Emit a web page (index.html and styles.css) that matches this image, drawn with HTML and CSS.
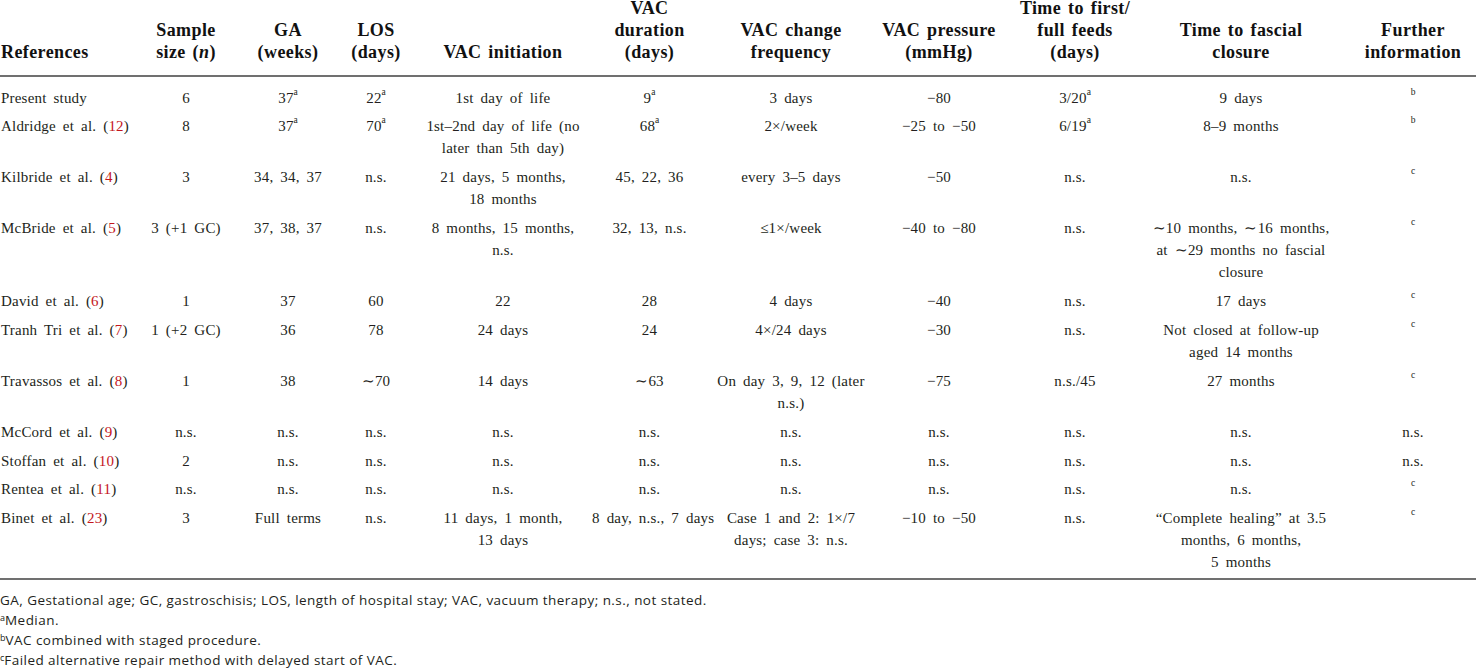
FILE: index.html
```html
<!DOCTYPE html>
<html lang="en">
<head>
<meta charset="utf-8">
<title>VAC therapy studies</title>
<link rel="stylesheet" href="styles.css">
</head>
<body>
<div class="page">
<table class="data">
  <colgroup>
    <col class="c1"><col class="c2"><col class="c3"><col class="c4"><col class="c5"><col class="c6">
    <col class="c7"><col class="c8"><col class="c9"><col class="c10"><col class="c11">
  </colgroup>
  <thead>
    <tr>
      <th class="ref">References</th>
      <th>Sample<br>size (<i>n</i>)</th>
      <th>GA<br>(weeks)</th>
      <th>LOS<br>(days)</th>
      <th>VAC initiation</th>
      <th>VAC<br>duration<br>(days)</th>
      <th>VAC change<br>frequency</th>
      <th>VAC pressure<br>(mmHg)</th>
      <th>Time to first/<br>full feeds<br>(days)</th>
      <th>Time to fascial<br>closure</th>
      <th class="last">Further<br>information</th>
    </tr>
  </thead>
  <tbody>
    <tr>
      <td class="ref">Present study</td><td>6</td><td>37<sup class="sup">a</sup></td><td>22<sup class="sup">a</sup></td>
      <td>1st day of life</td><td>9<sup class="sup">a</sup></td><td>3 days</td><td>−80</td><td>3/20<sup class="sup">a</sup></td>
      <td>9 days</td><td class="last"><sup class="sup">b</sup></td>
    </tr>
    <tr>
      <td class="ref">Aldridge et al. (<span class="cite">12</span>)</td><td>8</td><td>37<sup class="sup">a</sup></td><td>70<sup class="sup">a</sup></td>
      <td>1st–2nd day of life (no<br>later than 5th day)</td><td>68<sup class="sup">a</sup></td><td>2×/week</td><td>−25 to −50</td><td>6/19<sup class="sup">a</sup></td>
      <td>8–9 months</td><td class="last"><sup class="sup">b</sup></td>
    </tr>
    <tr>
      <td class="ref">Kilbride et al. (<span class="cite">4</span>)</td><td>3</td><td>34, 34, 37</td><td>n.s.</td>
      <td>21 days, 5 months,<br>18 months</td><td>45, 22, 36</td><td>every 3–5 days</td><td>−50</td><td>n.s.</td>
      <td>n.s.</td><td class="last"><sup class="sup">c</sup></td>
    </tr>
    <tr>
      <td class="ref">McBride et al. (<span class="cite">5</span>)</td><td>3 (+1 GC)</td><td>37, 38, 37</td><td>n.s.</td>
      <td>8 months, 15 months,<br>n.s.</td><td>32, 13, n.s.</td><td>≤1×/week</td><td>−40 to −80</td><td>n.s.</td>
      <td>∼10 months, ∼16 months,<br>at ∼29 months no fascial<br>closure</td><td class="last"><sup class="sup">c</sup></td>
    </tr>
    <tr>
      <td class="ref">David et al. (<span class="cite">6</span>)</td><td>1</td><td>37</td><td>60</td>
      <td>22</td><td>28</td><td>4 days</td><td>−40</td><td>n.s.</td>
      <td>17 days</td><td class="last"><sup class="sup">c</sup></td>
    </tr>
    <tr>
      <td class="ref">Tranh Tri et al. (<span class="cite">7</span>)</td><td>1 (+2 GC)</td><td>36</td><td>78</td>
      <td>24 days</td><td>24</td><td>4×/24 days</td><td>−30</td><td>n.s.</td>
      <td>Not closed at follow-up<br>aged 14 months</td><td class="last"><sup class="sup">c</sup></td>
    </tr>
    <tr>
      <td class="ref">Travassos et al. (<span class="cite">8</span>)</td><td>1</td><td>38</td><td>∼70</td>
      <td>14 days</td><td>∼63</td><td>On day 3, 9, 12 (later<br>n.s.)</td><td>−75</td><td>n.s./45</td>
      <td>27 months</td><td class="last"><sup class="sup">c</sup></td>
    </tr>
    <tr>
      <td class="ref">McCord et al. (<span class="cite">9</span>)</td><td>n.s.</td><td>n.s.</td><td>n.s.</td>
      <td>n.s.</td><td>n.s.</td><td>n.s.</td><td>n.s.</td><td>n.s.</td>
      <td>n.s.</td><td class="last">n.s.</td>
    </tr>
    <tr>
      <td class="ref">Stoffan et al. (<span class="cite">10</span>)</td><td>2</td><td>n.s.</td><td>n.s.</td>
      <td>n.s.</td><td>n.s.</td><td>n.s.</td><td>n.s.</td><td>n.s.</td>
      <td>n.s.</td><td class="last">n.s.</td>
    </tr>
    <tr>
      <td class="ref">Rentea et al. (<span class="cite">11</span>)</td><td>n.s.</td><td>n.s.</td><td>n.s.</td>
      <td>n.s.</td><td>n.s.</td><td>n.s.</td><td>n.s.</td><td>n.s.</td>
      <td>n.s.</td><td class="last"><sup class="sup">c</sup></td>
    </tr>
    <tr>
      <td class="ref">Binet et al. (<span class="cite">23</span>)</td><td>3</td><td>Full terms</td><td>n.s.</td>
      <td>11 days, 1 month,<br>13 days</td><td>8 day, n.s., 7 days</td><td>Case 1 and 2: 1×/7<br>days; case 3: n.s.</td><td>−10 to −50</td><td>n.s.</td>
      <td>“Complete healing” at 3.5<br>months, 6 months,<br>5 months</td><td class="last"><sup class="sup">c</sup></td>
    </tr>
  </tbody>
</table>
<div class="notes">
  <p>GA, Gestational age; GC, gastroschisis; LOS, length of hospital stay; VAC, vacuum therapy; n.s., not stated.</p>
  <p><sup class="fsup">a</sup>Median.</p>
  <p><sup class="fsup">b</sup>VAC combined with staged procedure.</p>
  <p><sup class="fsup">c</sup>Failed alternative repair method with delayed start of VAC.</p>
</div>
</div>
</body>
</html>
```

FILE: styles.css
```css
html, body {
  margin: 0;
  padding: 0;
  background: #ffffff;
}

.page {
  width: 1476px;
}

.data {
  width: 1476px;
  table-layout: fixed;
  border-collapse: collapse;
  margin-top: -3px;
  font-family: "Liberation Serif", "Times New Roman", serif;
  color: #231f20;
}

.c1 { width: 134px; }
.c2 { width: 104px; }
.c3 { width: 100px; }
.c4 { width: 76px; }
.c5 { width: 178px; }
.c6 { width: 115px; }
.c7 { width: 168px; }
.c8 { width: 128px; }
.c9 { width: 144px; }
.c10 { width: 188px; }
.c11 { width: 141px; }

.data th {
  font-size: 18px;
  font-weight: bold;
  line-height: 22px;
  letter-spacing: 0.4px;
  word-spacing: 2px;
  color: #111;
  text-align: center;
  vertical-align: bottom;
  padding: 0 0 12px 0;
  border-bottom: 2px solid #707070;
  white-space: nowrap;
}

.data th i {
  font-style: italic;
}

.data td {
  font-size: 15px;
  line-height: 22px;
  letter-spacing: 0.2px;
  word-spacing: 3px;
  text-align: center;
  vertical-align: top;
  padding: 3.45px 0;
  white-space: nowrap;
}

.data .ref {
  text-align: left;
  padding-left: 1px;
}

.data .last {
  padding-left: 15px;
}

.data tbody tr:first-child td {
  padding-top: 9.5px;
}

.data tbody tr:last-child td {
  padding-bottom: 5px;
  border-bottom: 2px solid #707070;
}

.cite {
  color: #c4161c;
}

.sup {
  font-size: 9.5px;
  line-height: 0;
  vertical-align: 8px;
  letter-spacing: 0;
}

.notes {
  margin-top: 10px;
  font-family: "Open Sans", "Noto Sans", sans-serif;
  font-size: 13.5px;
  line-height: 20px;
  letter-spacing: 0.45px;
  color: #231f20;
}

.notes p {
  margin: 0;
}

.fsup {
  font-size: 9px;
  line-height: 0;
  vertical-align: 4px;
  letter-spacing: 0;
}
```
